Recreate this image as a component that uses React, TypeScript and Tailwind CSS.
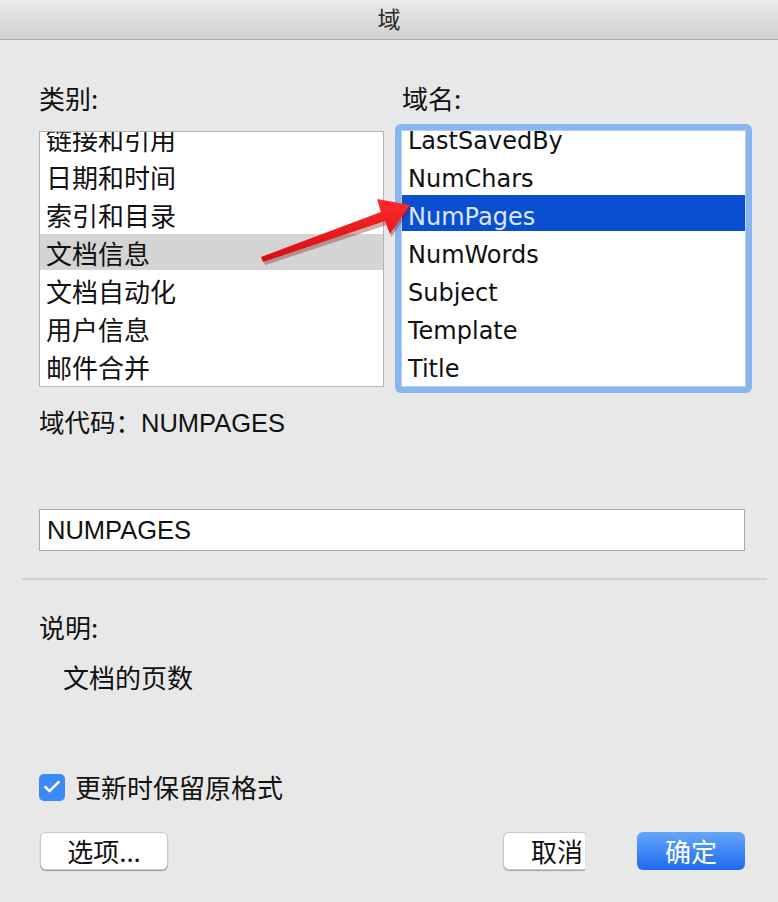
import { Check } from "lucide-react";

const cjk = "font-['Noto_Sans_CJK_SC',sans-serif]";
const latin = "font-['DejaVu_Sans','Noto_Sans_CJK_SC',sans-serif]";
const mixed = "font-['Liberation_Sans','Noto_Sans_CJK_SC',sans-serif]";

const categories = ["链接和引用", "日期和时间", "索引和目录", "文档信息", "文档自动化", "用户信息", "邮件合并"];
const fields = ["LastSavedBy", "NumChars", "NumPages", "NumWords", "Subject", "Template", "Title"];

export default function App() {
  return (
    <div className={`relative w-[778px] h-[902px] overflow-hidden bg-[#e8e8e8] text-[#111] ${cjk}`}>
      {/* Title bar */}
      <div className="h-[40px] flex items-center justify-center border-b border-[#a9a9a9] bg-gradient-to-b from-[#ebe9eb] to-[#d2d0d2]">
        <span className="text-[23px] leading-none text-[#2a2a2a] pb-[2px]">域</span>
      </div>

      {/* Labels */}
      <div className="h-[84px] flex pt-[44px] pl-[39px]">
        <div className="w-[363px] text-[26px] leading-[28px]">类别:</div>
        <div className="text-[26px] leading-[28px]">域名:</div>
      </div>

      {/* Lists */}
      <div className="flex pl-[39px] h-[269px]">
        <div className="mt-[7px] w-[345px] h-[256px] border border-[#b4b4b4] bg-white overflow-hidden">
          <div className="mt-[-12px]">
            {categories.map((c) => (
              <div
                key={c}
                className={`h-[36px] mb-[2px] pl-[6px] pt-[3px] text-[26px] leading-[32px] ${c === "文档信息" ? "bg-[#d4d4d4]" : ""}`}
              >
                {c}
              </div>
            ))}
          </div>
        </div>

        <div className="ml-[11px] w-[357px] h-[269px] rounded-[6px] bg-[#86b5f0] p-[6px]">
          <div className="h-full border border-[#b7cff0] bg-white overflow-hidden">
            <div className="mt-[-12px]">
              {fields.map((f) => (
                <div
                  key={f}
                  className={`h-[36px] mb-[2px] pl-[6px] pt-[5px] text-[24px] leading-[34px] ${latin} ${f === "NumPages" ? "bg-[#0b4fd1] text-[#dbe7ff]" : ""}`}
                >
                  {f}
                </div>
              ))}
            </div>
          </div>
        </div>
      </div>

      {/* Field code */}
      <div className={`pl-[39px] pt-[16px] h-[60px] text-[25.5px] leading-[28px] ${mixed}`}>域代码：NUMPAGES</div>

      <div className="mt-[56px] ml-[39px] w-[706px] h-[42px] border border-[#a9a9a9] bg-white flex items-center pl-[7px]">
        <span className={`text-[25.5px] leading-none pt-[2px] ${mixed}`}>NUMPAGES</span>
      </div>

      <div className="mt-[27px] ml-[22px] w-[745px] h-[2px] bg-[#d0d0d0]" />

      {/* Description */}
      <div className="mt-[33px] pl-[39px] text-[26px] leading-[28px]">说明:</div>
      <div className="mt-[22px] pl-[63px] text-[26px] leading-[28px]">文档的页数</div>

      {/* Checkbox */}
      <div className="mt-[82px] pl-[39px] flex items-center gap-[10px] h-[28px]">
        <div className="w-[26px] h-[27px] rounded-[5px] bg-[#3a89f6] flex items-center justify-center">
          <Check className="w-[20px] h-[20px] text-white" strokeWidth={3} />
        </div>
        <span className="text-[26px] leading-[28px]">更新时保留原格式</span>
      </div>

      {/* Buttons */}
      <div className="mt-[31px] flex items-center pl-[40px]">
        <button className="w-[128px] h-[38px] rounded-[6px] bg-white border border-[#c9c9c9] shadow-[0_1px_1px_rgba(0,0,0,0.35)] text-[26px] leading-none">
          选项...
        </button>
        <button className="ml-[335px] w-[82px] h-[38px] rounded-l-[6px] bg-white border border-r-0 border-[#c9c9c9] shadow-[0_1px_1px_rgba(0,0,0,0.3)] text-[26px] leading-none flex items-center pl-[27px]">
          取消
        </button>
        <button className="ml-[52px] w-[108px] h-[38px] rounded-[6px] bg-gradient-to-b from-[#66a6fa] to-[#1a69ef] text-white text-[26px] leading-none">
          确定
        </button>
      </div>

      {/* Red annotation arrow */}
      <svg className="absolute left-0 top-0 pointer-events-none" width="778" height="902" viewBox="0 0 778 902">
        <defs>
          <linearGradient id="arrowFill" x1="0" y1="0" x2="0" y2="1">
            <stop offset="0" stopColor="#ff2a2a" />
            <stop offset="1" stopColor="#d40d12" />
          </linearGradient>
        </defs>
        <polygon
          points="262,260 381,214 377,199 410,206 390,235 385,223 264,263"
          fill="#7a1010"
          opacity="0.35"
          transform="translate(1.5,2)"
        />
        <polygon points="261,257 381,212 377,199 410,205 390,234 385,221 263,262" fill="url(#arrowFill)" />
      </svg>
    </div>
  );
}
